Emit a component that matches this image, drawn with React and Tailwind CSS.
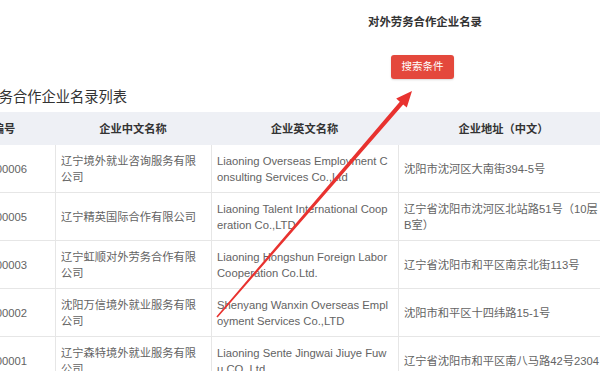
const ROWS = [
  {
    no: "0000006",
    cn: "辽宁境外就业咨询服务有限公司",
    en: "Liaoning Overseas Employment Consulting Services Co.,Ltd",
    addr: "沈阳市沈河区大南街394-5号",
  },
  {
    no: "0000005",
    cn: "辽宁精英国际合作有限公司",
    en: "Liaoning Talent International Cooperation Co.,LTD",
    addr: "辽宁省沈阳市沈河区北站路51号（10层B室）",
  },
  {
    no: "0000003",
    cn: "辽宁虹顺对外劳务合作有限公司",
    en: "Liaoning Hongshun Foreign Labor Cooperation Co.Ltd.",
    addr: "辽宁省沈阳市和平区南京北街113号",
  },
  {
    no: "0000002",
    cn: "沈阳万信境外就业服务有限公司",
    en: "Shenyang Wanxin Overseas Employment Services Co.,LTD",
    addr: "沈阳市和平区十四纬路15-1号",
  },
  {
    no: "0000001",
    cn: "辽宁森特境外就业服务有限公司",
    en: "Liaoning Sente Jingwai Jiuye Fuwu CO.,Ltd",
    addr: "辽宁省沈阳市和平区南八马路42号2304",
  },
];

const FONT = { fontFamily: '"Liberation Sans", "Noto Sans CJK SC", sans-serif' };

function Arrow() {
  // tapered red pen stroke pointing at the search button
  return (
    <svg className="absolute inset-0 pointer-events-none" width="600" height="371" viewBox="0 0 600 371">
      <polygon
        points="217.6,317.5 403.2,104.5 406.8,107.6 412,91 396.2,98.6 399.8,101.7 216.4,316.5"
        fill="#e8322f"
      />
    </svg>
  );
}

export default function App() {
  return (
    <div className="relative w-[600px] h-[371px] overflow-hidden bg-white" style={FONT}>
      {/* ── Page title + search button ── */}
      <div className="pt-[14px] pl-[368px] text-[11.4px] leading-[16px] font-bold text-[#333] whitespace-nowrap">
        对外劳务合作企业名录
      </div>
      <div className="mt-[25px] ml-[391px] w-[63px] h-[24px] rounded-[3px] bg-[#e4483c] text-white text-[10.5px] flex items-center justify-center shadow-[0_1px_2px_rgba(0,0,0,0.15)]">
        搜索条件
      </div>

      {/* ── List ── */}
      <div className="-ml-[47px] w-[656px]">
        <h2 className="mt-[8px] pl-[3px] h-[20px] text-[14.25px] leading-[20px] text-[#333]">
          对外劳务合作企业名录列表
        </h2>

        <div className="mt-[5px] grid grid-cols-[102px_156px_187px_211px] text-[11.25px] leading-[16px]">
          {/* header */}
          <div className="h-[33px] bg-[#eef0f5] flex items-center justify-center font-bold text-[#333]">编号</div>
          <div className="h-[33px] bg-[#eef0f5] flex items-center justify-center font-bold text-[#333]">企业中文名称</div>
          <div className="h-[33px] bg-[#eef0f5] flex items-center justify-center font-bold text-[#333]">企业英文名称</div>
          <div className="h-[33px] bg-[#eef0f5] flex items-center justify-center font-bold text-[#333]">企业地址（中文）</div>

          {ROWS.map((r) => (
            <div key={r.no} className="contents text-[#636363]">
              <div className="h-[48px] border-b border-[#e6e6e6] flex items-center justify-end pr-[28px]">{r.no}</div>
              <div className="h-[48px] border-b border-l border-[#e6e6e6] flex items-center pl-[5px] pr-[6px]">
                <span>{r.cn}</span>
              </div>
              <div className="h-[48px] border-b border-l border-[#e6e6e6] flex items-center pl-[5px] pr-[6px]">
                <span className="break-all">{r.en}</span>
              </div>
              <div className="h-[48px] border-b border-l border-[#e6e6e6] flex items-center pl-[5px] pr-[6px]">
                <span>{r.addr}</span>
              </div>
            </div>
          ))}
        </div>
      </div>

      <Arrow />
    </div>
  );
}
